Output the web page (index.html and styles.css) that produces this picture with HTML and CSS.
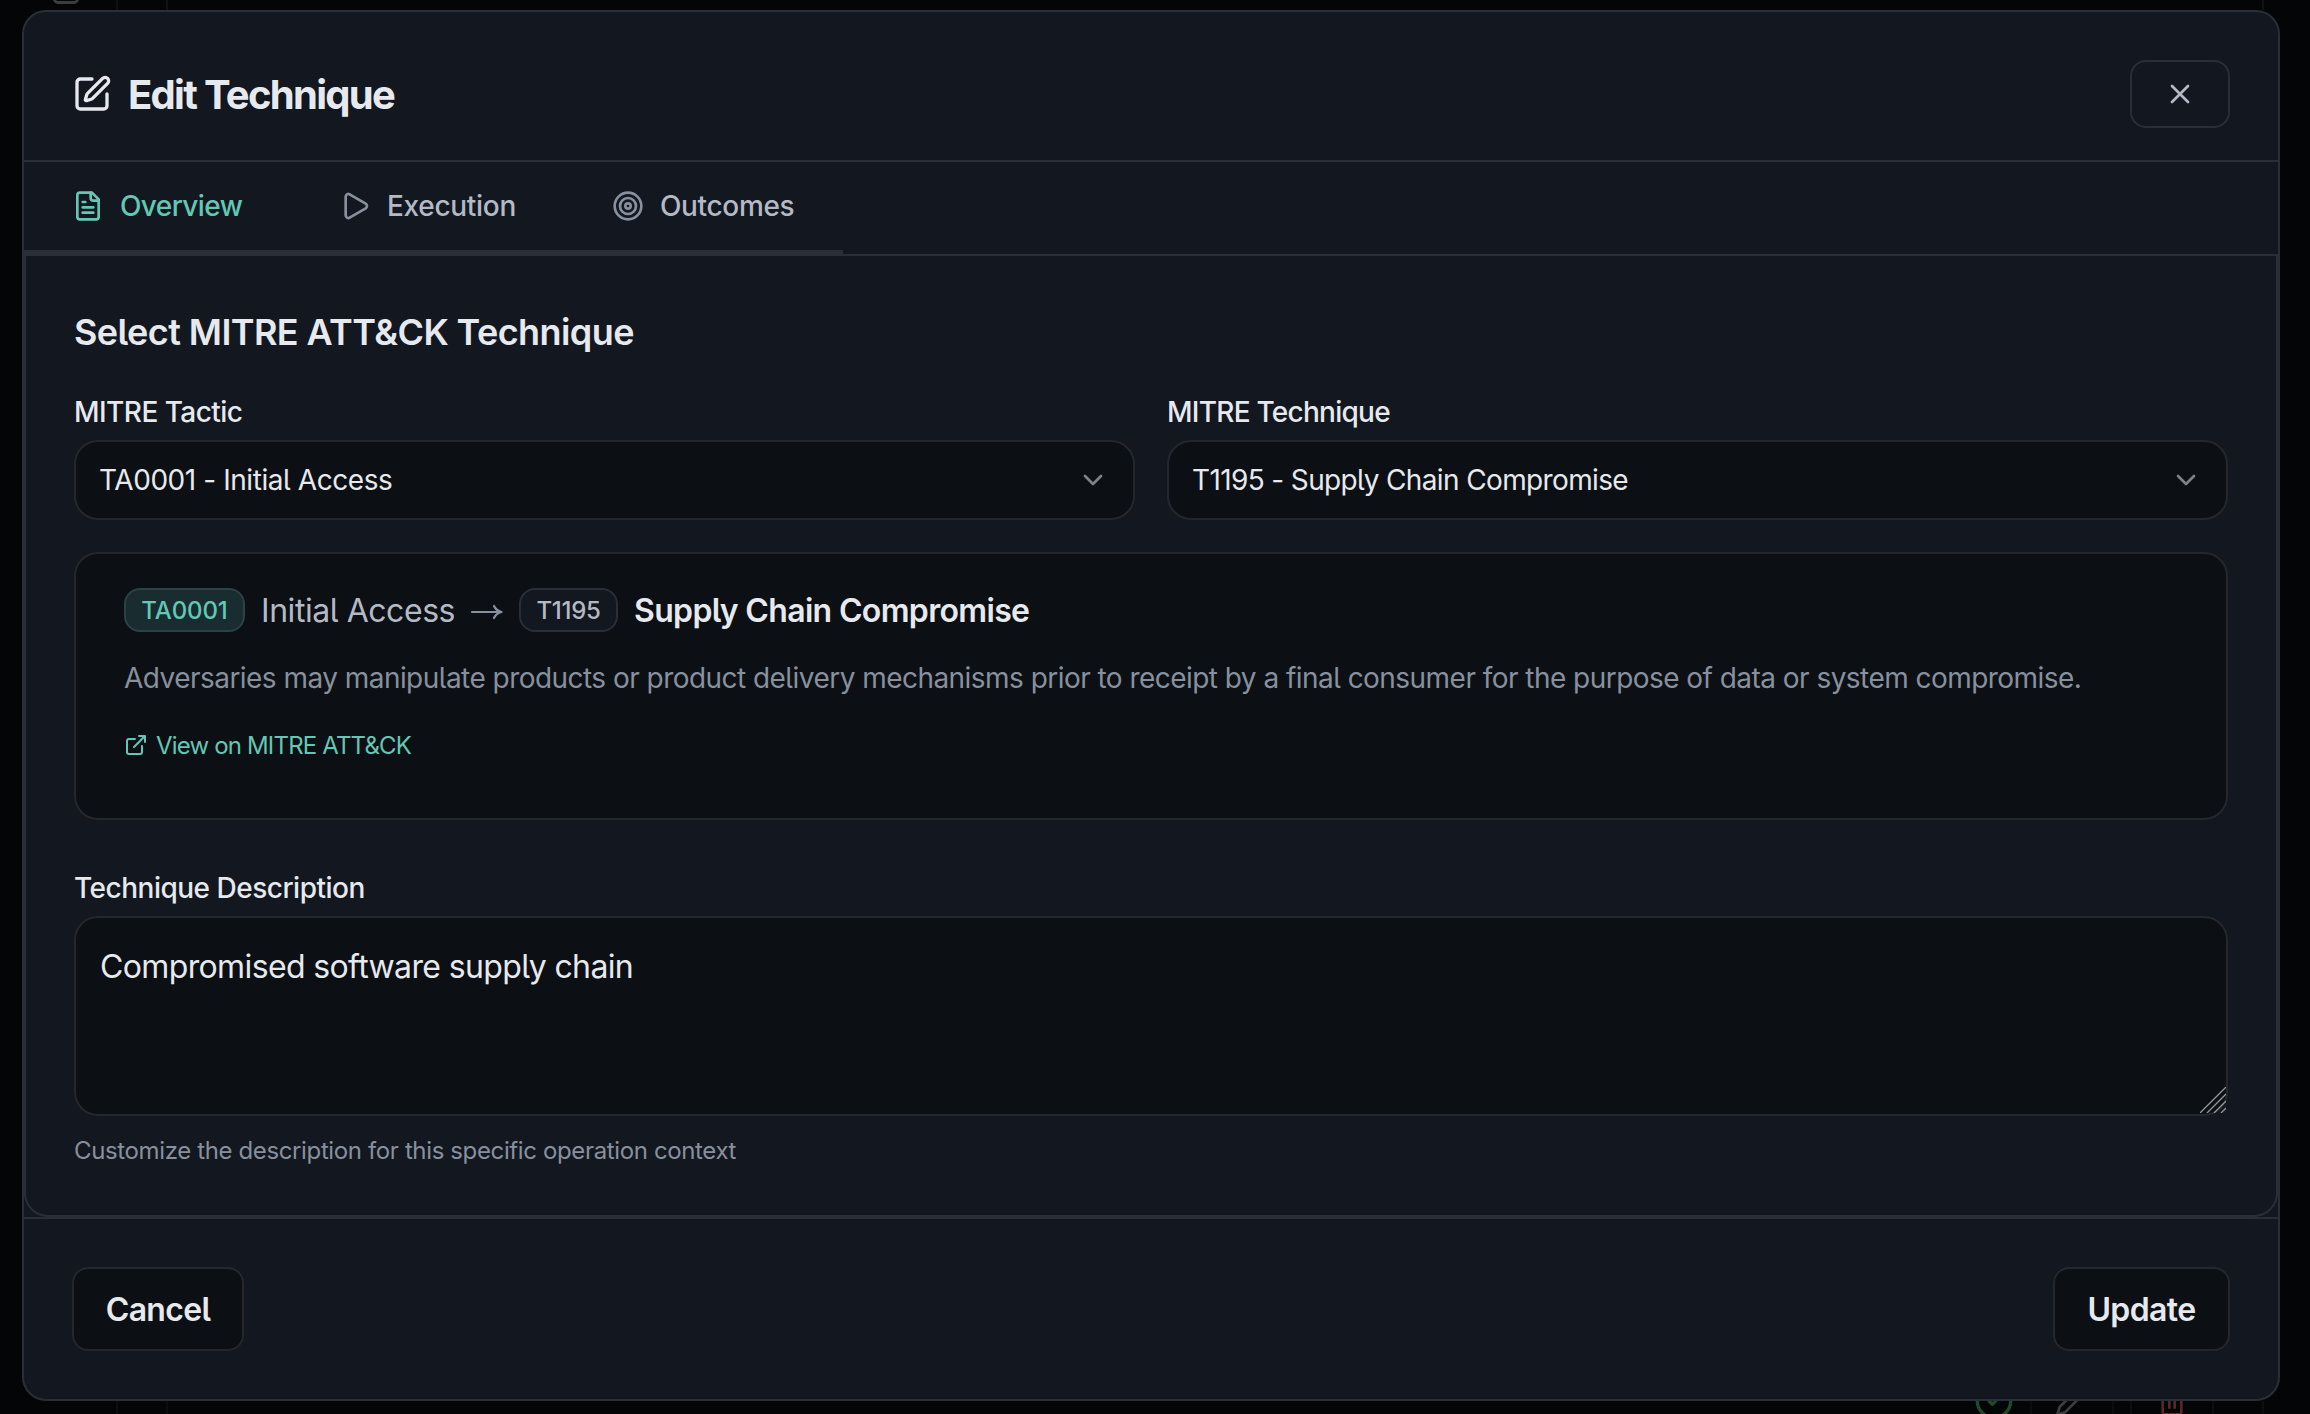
FILE: index.html
```html
<!DOCTYPE html>
<html lang="en">
<head>
<meta charset="utf-8">
<title>Edit Technique</title>
<link rel="stylesheet" href="styles.css">
</head>
<body>
<div class="backdrop" aria-hidden="true">
  <span class="guide guide-a"></span><span class="guide guide-b"></span><span class="guide guide-c"></span>
  <span class="guide low guide-a"></span><span class="guide low guide-b"></span><span class="guide low guide-d"></span><span class="guide low guide-e"></span><span class="guide low guide-f"></span><span class="guide low guide-g"></span><span class="guide low guide-c"></span>
  <span class="stub"></span>
  <svg class="under check" viewBox="0 0 24 24"><circle cx="12" cy="12" r="10"/><path d="m9 12 2 2 4-4"/></svg>
  <svg class="under pencil" viewBox="0 0 24 24"><path d="M21.174 6.812a1 1 0 0 0-3.986-3.987L3.842 16.174a2 2 0 0 0-.5.83l-1.321 4.352a.5.5 0 0 0 .623.622l4.353-1.32a2 2 0 0 0 .83-.497z"/><path d="m15 5 4 4"/></svg>
  <svg class="under trash" viewBox="0 0 24 24"><path d="M3 6h18M19 6v14a2 2 0 0 1-2 2H7a2 2 0 0 1-2-2V6M8 6V4a2 2 0 0 1 2-2h4a2 2 0 0 1 2 2v2M10 11v6M14 11v6"/></svg>
</div>
<main class="modal">
  <header class="head">
    <svg class="icon i-title" viewBox="0 0 24 24"><path d="M12 3H5a2 2 0 0 0-2 2v14a2 2 0 0 0 2 2h14a2 2 0 0 0 2-2v-7"/><path d="M18.375 2.625a1 1 0 0 1 3 3l-9.013 9.014a2 2 0 0 1-.853.505l-2.873.84a.5.5 0 0 1-.62-.62l.84-2.873a2 2 0 0 1 .506-.852z"/></svg>
    <h1><span class="t t-title">Edit Technique</span></h1>
    <button class="close" aria-label="Close"><svg class="icon i-x" viewBox="0 0 24 24"><path d="M18 6 6 18M6 6l12 12"/></svg></button>
  </header>
  <nav class="tabs">
    <div class="tablist">
      <a class="tab tab-1 active"><svg class="icon i-tab" viewBox="0 0 24 24"><path d="M15 2H6a2 2 0 0 0-2 2v16a2 2 0 0 0 2 2h12a2 2 0 0 0 2-2V7Z"/><path d="M14 2v4a2 2 0 0 0 2 2h4M10 9H8M16 13H8M16 17H8"/></svg><span class="t t-ov">Overview</span></a>
      <a class="tab tab-2"><svg class="icon i-tab" viewBox="0 0 24 24"><path d="M5 5a2 2 0 0 1 3.008-1.728l11.997 6.998a2 2 0 0 1 .003 3.458l-12 7A2 2 0 0 1 5 19z"/></svg><span class="t t-ex">Execution</span></a>
      <a class="tab tab-3"><svg class="icon i-tab" viewBox="0 0 24 24"><circle cx="12" cy="12" r="10"/><circle cx="12" cy="12" r="6"/><circle cx="12" cy="12" r="2"/></svg><span class="t t-ou">Outcomes</span></a>
    </div>
  </nav>
  <section class="body">
    <h2><span class="t t-h2">Select MITRE ATT&amp;CK Technique</span></h2>
    <div class="fields">
      <div class="field">
        <label><span class="t t-l1">MITRE Tactic</span></label>
        <div class="select"><span class="t t-s1">TA0001 - Initial Access</span><svg class="icon i-chev" viewBox="0 0 24 24"><path d="m6 9 6 6 6-6"/></svg></div>
      </div>
      <div class="field">
        <label><span class="t t-l2">MITRE Technique</span></label>
        <div class="select"><span class="t t-s2">T1195 - Supply Chain Compromise</span><svg class="icon i-chev" viewBox="0 0 24 24"><path d="m6 9 6 6 6-6"/></svg></div>
      </div>
    </div>
    <article class="card">
      <div class="path">
        <span class="badge badge-teal"><span class="t t-b1">TA0001</span></span>
        <span class="t t-ia">Initial Access</span>
        <svg class="arrow" viewBox="0 0 32 20"><path d="M1 10h29M23 4q2 4.500 7.500 6q-5.500 1.500-7.500 6"/></svg>
        <span class="badge"><span class="t t-b2">T1195</span></span>
        <strong class="t t-sc">Supply Chain Compromise</strong>
      </div>
      <p class="desc"><span class="t t-desc">Adversaries may manipulate products or product delivery mechanisms prior to receipt by a final consumer for the purpose of data or system compromise.</span></p>
      <a class="link"><svg class="icon i-ext" viewBox="0 0 24 24"><path d="M15 3h6v6M10 14 21 3M18 13v6a2 2 0 0 1-2 2H5a2 2 0 0 1-2-2V8a2 2 0 0 1 2-2h6"/></svg><span class="t t-link">View on MITRE ATT&amp;CK</span></a>
    </article>
    <label><span class="t t-l3">Technique Description</span></label>
    <div class="area"><span class="t t-area">Compromised software supply chain</span>
      <svg class="grip" viewBox="0 0 26 26"><path d="M0 26 26 0M7 26 26 7M14 26 26 14M21 26l5-5"/></svg>
    </div>
    <p class="hint"><span class="t t-hint">Customize the description for this specific operation context</span></p>
  </section>
  <footer class="foot">
    <button class="btn btn-cancel"><span class="t t-cancel">Cancel</span></button>
    <button class="btn btn-update"><span class="t t-update">Update</span></button>
  </footer>
</main>
</body>
</html>
```
FILE: styles.css
```css
* { box-sizing: border-box; }
body { margin: 0; width: 2310px; height: 1414px; overflow: hidden; background: #040507; color: #e6e9ee; font-family: Inter, "Liberation Sans", sans-serif; padding: 10px 30px 13px 22px; position: relative; }
h1, h2, p { margin: 0; }
button { font: inherit; color: inherit; padding: 0; }
.t { white-space: nowrap; font-feature-settings: "cv05"; }
.icon { fill: none; stroke: currentColor; stroke-width: 2; stroke-linecap: round; stroke-linejoin: round; flex: none; display: block; }

/* page behind the dialog */
.backdrop { position: absolute; inset: 0; overflow: hidden; }
.guide { position: absolute; top: 0; height: 10px; width: 2px; background: #101113; }
.guide.low { top: 1401px; height: 13px; background: #0c0d0f; }
.guide-a { left: 116px; } .guide-b { left: 166px; } .guide-c { left: 2262px; }
.guide-d { left: 2030px; } .guide-e { left: 2112px; } .guide-f { left: 2130px; } .guide-g { left: 2212px; }
.stub { position: absolute; left: 53px; top: -20px; width: 26px; height: 24px; border: 3px solid #3c3d40; border-radius: 5px; }
.under { position: absolute; fill: none; stroke-width: 2; stroke-linecap: round; stroke-linejoin: round; }
.check { left: 1974px; top: 1381px; width: 40px; height: 40px; stroke: #1f4a2c; }
.pencil { left: 2055px; top: 1385px; width: 32px; height: 32px; stroke: #3d3e41; }
.trash { left: 2156px; top: 1385px; width: 32px; height: 32px; stroke: #5b2626; }

.modal { position: relative; display: flex; flex-direction: column; width: 2258px; height: 1391px; background: #13171f; border: 2px solid #2a2e36; border-radius: 24px; overflow: hidden; }
.head { height: 150px; flex: none; display: flex; align-items: center; padding: 16px 48px 0 48px; border-bottom: 2px solid #2a2e36; }
.i-title { width: 40px; height: 40px; }
h1 { margin-left: 16px; padding-top: 1px; font-size: 40px; line-height: 48px; font-weight: 650; }
.close { margin-left: auto; width: 100px; height: 68px; border: 2px solid #2a2e36; border-radius: 16px; background: transparent; color: #b4b9c6; display: grid; place-items: center; }
.i-x { width: 32px; height: 32px; }

.tabs { height: 94px; flex: none; border-bottom: 2px solid #2a2e36; }
.tablist { width: 819px; height: 92px; border-bottom: 4px solid #2a2e36; display: flex; align-items: center; color: #b4b9c6; font-size: 28px; font-weight: 500; padding-left: 48px; }
.tab { display: flex; align-items: center; gap: 16px; }
.tab-1 { width: 267px; } .tab-2 { width: 273px; }
.active { color: #63c7b5; }
.i-tab { width: 32px; height: 32px; }
.tab:not(.active) .i-tab { color: #87909e; }

.body { height: 961px; flex: none; display: flex; flex-direction: column; border: 2px solid #2a2e36; border-top: 0; border-radius: 0 0 24px 24px; padding: 50px 48px 0; }
h2 { font-size: 36px; line-height: 52px; font-weight: 600; }
label { display: block; font-size: 28px; line-height: 40px; font-weight: 500; }
.fields { display: grid; grid-template-columns: 1fr 1fr; gap: 32px; margin-top: 34px; }
.select { margin-top: 8px; height: 80px; border: 2px solid #24272c; border-radius: 24px; background: #0c0f13; display: flex; align-items: center; justify-content: space-between; padding: 0 24px 0 23px; font-size: 28px; }
.i-chev { width: 32px; height: 32px; color: #7e8185; }
.card { margin-top: 32px; height: 268px; border: 2px solid #24272c; border-radius: 24px; background: #0c0f13; padding: 34px 48px 0; }
.path { display: flex; align-items: center; height: 44px; gap: 16px; color: #b4b9c6; font-size: 32px; }
.badge { height: 44px; width: 99px; border: 2px solid #2a2e36; border-radius: 16px; background: #13171f; display: flex; align-items: center; justify-content: center; font-size: 24px; font-weight: 500; flex: none; }
.badge-teal { width: 121px; color: #63c7b5; background: #192c30; border-color: #2c4245; }
.arrow { width: 32px; height: 20px; fill: none; stroke: #87909e; stroke-width: 2.2; stroke-linecap: round; stroke-linejoin: round; flex: none; margin-top: 4px; }
.path strong { font-weight: 600; color: #e6e9ee; }
.desc { margin-top: 24px; font-size: 28px; line-height: 44px; color: #87909e; }
.link { display: flex; align-items: center; gap: 8px; margin-top: 25px; height: 40px; font-size: 24px; color: #63c7b5; }
.i-ext { width: 24px; height: 24px; }
.card + label { margin-top: 48px; }
.area { position: relative; margin-top: 8px; height: 200px; border: 2px solid #24272c; border-radius: 24px; background: #0c0f13; padding: 24px 24px; font-size: 32px; line-height: 50px; }
.grip { position: absolute; right: 0; bottom: 1px; width: 26px; height: 26px; fill: none; stroke: #96989c; stroke-width: 1.3; }
.hint { margin-top: 16px; font-size: 24px; line-height: 38px; color: #87909e; }
.foot { flex: 1; border-top: 2px solid #2a2e36; display: flex; justify-content: space-between; padding: 48px 48px 0; }
.btn { height: 84px; border: 2px solid #24272c; border-radius: 16px; background: #0c0f13; font-size: 32px; font-weight: 600; }
.btn-cancel { width: 172px; } .btn-update { width: 177px; }

/* tracking */
.t-title { letter-spacing: -1.7px; }
.t-ov { letter-spacing: -.6px; }
.t-ex { letter-spacing: -.3px; }
.t-ou { letter-spacing: -.35px; }
.t-h2 { letter-spacing: -.58px; }
.t-l1 { letter-spacing: -.55px; }
.t-l2 { letter-spacing: -.74px; }
.t-l3 { letter-spacing: -.5px; }
.t-s1 { letter-spacing: -.43px; }
.t-s2 { letter-spacing: -.63px; }
.t-b1 { letter-spacing: -.1px; }
.t-b2 { letter-spacing: -.3px; }
.t-ia { letter-spacing: -.45px; }
.t-sc { letter-spacing: -.66px; }
.t-desc { letter-spacing: -.54px; }
.t-link { letter-spacing: -.83px; }
.t-area { letter-spacing: -.63px; }
.t-hint { letter-spacing: -.37px; }
.t-cancel { letter-spacing: -.7px; }
.t-update { letter-spacing: -.6px; }
```
